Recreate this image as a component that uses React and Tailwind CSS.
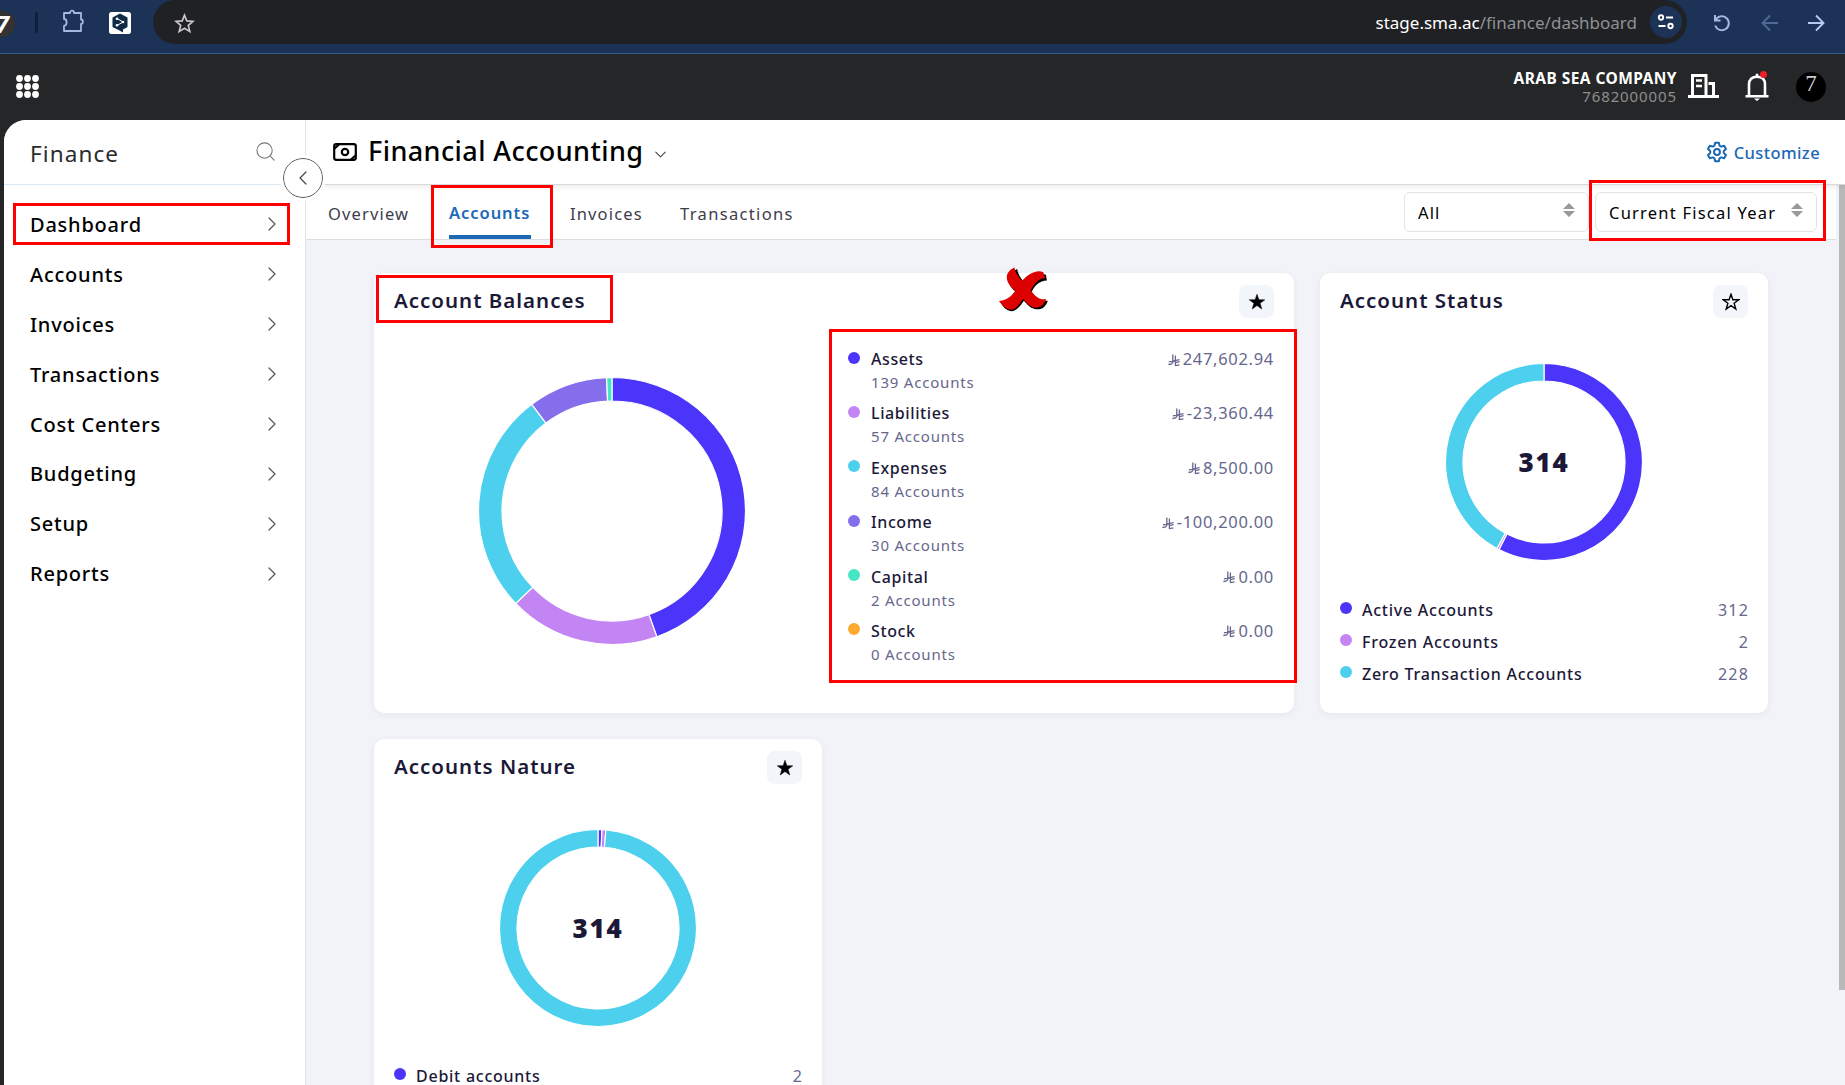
import React from 'react';
import { Search, ChevronRight, ChevronLeft, ChevronDown } from 'lucide-react';

const menu = ['Dashboard', 'Accounts', 'Invoices', 'Transactions', 'Cost Centers', 'Budgeting', 'Setup', 'Reports'];

const balances = [
  { name: 'Assets', count: 139, amount: '247,602.94', color: '#4b35fa' },
  { name: 'Liabilities', count: 57, amount: '-23,360.44', color: '#c485f4' },
  { name: 'Expenses', count: 84, amount: '8,500.00', color: '#4dd0ed' },
  { name: 'Income', count: 30, amount: '-100,200.00', color: '#856eec' },
  { name: 'Capital', count: 2, amount: '0.00', color: '#46e6c4' },
  { name: 'Stock', count: 0, amount: '0.00', color: '#ffa931' },
];

const status = [
  { name: 'Active Accounts', count: 312, color: '#4b35fa' },
  { name: 'Frozen Accounts', count: 2, color: '#c485f4' },
  { name: 'Zero Transaction Accounts', count: 228, color: '#4dd0ed' },
];

const nature = [
  { name: 'Debit accounts', count: 2, color: '#4b35fa' },
  { name: 'Credit accounts', count: 2, color: '#c485f4' },
  { name: 'Both', count: 310, color: '#4dd0ed' },
];

function Donut({ size, outer, inner, data, label }) {
  const total = data.reduce((sum, d) => sum + d.count, 0);
  const c = size / 2;
  const point = (r, t) => {
    const a = t * 2 * Math.PI;
    return `${c + r * Math.sin(a)} ${c - r * Math.cos(a)}`;
  };
  let from = 0;

  return (
    <div className="relative flex items-center justify-center">
      <svg width={size} height={size}>
        {data.filter((d) => d.count > 0).map((d) => {
          const start = from / total;
          from += d.count;
          const end = from / total;
          const large = end - start > 0.5 ? 1 : 0;
          return (
            <path
              key={d.name}
              d={`M${point(outer, start)}A${outer} ${outer} 0 ${large} 1 ${point(outer, end)}L${point(inner, end)}A${inner} ${inner} 0 ${large} 0 ${point(inner, start)}Z`}
              fill={d.color}
              stroke="#fff"
              strokeWidth="1.2"
            />
          );
        })}
      </svg>
      {label && (
        <span className="absolute top-1/2 -translate-y-1/2 text-[26px] font-black tracking-[1.8px] text-[#1c1938]">{label}</span>
      )}
    </div>
  );
}

function Riyal() {
  return (
    <svg width="12" height="13" viewBox="0 0 12 13" fill="none" stroke="currentColor" strokeWidth="1.3" className="mt-0.5 mr-[3px]">
      <path d="M4.8 0.6V8.2L3.6 9.8L0.4 10.5M7.4 1.4V12M0.9 7.9L11.6 5.6M7.4 8.6L11.6 7.7M7.4 11.7L11.4 10.8" />
    </svg>
  );
}

function StarButton({ filled }) {
  return (
    <button className="flex h-[33px] w-[35px] items-center justify-center rounded-lg bg-[#f2f5fa]">
      <svg width="18" height="18" viewBox="0 0 18 18" fill={filled ? '#000' : 'none'} stroke="#000" strokeWidth={filled ? 0.5 : 1.4}>
        <path d="M9 1.2L10.9 6.7L16.8 6.8L12.1 10.3L13.8 16L9 12.6L4.2 16L5.9 10.3L1.2 6.8L7.1 6.7Z" />
      </svg>
    </button>
  );
}

function Card({ title, filled, className, children }) {
  return (
    <section className={`relative flex flex-col rounded-[10px] bg-white px-5 pt-3 shadow-[0_2px_6px_rgba(60,50,140,0.07)] ${className}`}>
      <div className="flex items-start justify-between">
        <h2 className="mt-px text-[20.5px] leading-[29px] font-semibold tracking-[1px] text-[#1c1938]">{title}</h2>
        <StarButton filled={filled} />
      </div>
      {children}
    </section>
  );
}

function Legend({ data }) {
  return (
    <ul className="mt-[32px] flex flex-col">
      {data.map((d) => (
        <li key={d.name} className="flex h-8 items-center text-[16px]">
          <span className="mr-[10px] mb-1 size-3 rounded-full" style={{ backgroundColor: d.color }} />
          <span className="font-medium tracking-[0.75px] text-[#1c1938]">{d.name}</span>
          <span className="-mr-px ml-auto tracking-[1.2px] text-[#66678d]">{d.count}</span>
        </li>
      ))}
    </ul>
  );
}

function SortArrows() {
  return (
    <svg width="12" height="14" viewBox="0 0 12 14" fill="#999" className="-mt-1">
      <path d="M6 0L12 6H0ZM6 14L0 8H12Z" />
    </svg>
  );
}

function BrowserBar() {
  return (
    <div className="flex h-[54px] items-start border-b border-[#3a5a8c] bg-[#1c3257]">
      <div className="mt-[11px] flex h-[26px] w-[15px] items-center justify-end overflow-hidden rounded-r-full bg-[#333] pr-[6px] text-[24px] font-bold text-white italic">7</div>
      <div className="mt-3 ml-5 h-[21px] w-[3px] rounded bg-[#0f1e3c]" />
      <svg width="24" height="24" viewBox="0 0 24 24" fill="none" stroke="#a3b9df" strokeWidth="1.8" strokeLinejoin="round" className="mt-[9px] ml-[23px]">
        <path d="M3 4H9C9 .9 13 .9 13 4H20V10.5C22.5 10.5 22.5 15 20 15V22H3V17C6.5 16.5 6.5 10 3 10Z" />
      </svg>
      <svg width="22" height="22" viewBox="0 0 22 22" className="mt-3 ml-6">
        <rect width="22" height="22" rx="2.5" fill="#fff" />
        <path d="M11 1.5L18.5 5.5V15L14 17.5V20.5L10.5 18.5L3.5 15V5.5Z" fill="#0f2b46" />
        <path d="M8 6.5L14 10L8 13.5" fill="none" stroke="#fff" />
        <circle cx="8" cy="6.8" r="1.3" fill="#fff" />
        <circle cx="14" cy="10" r="1.3" fill="#fff" />
        <circle cx="8" cy="13.2" r="1.3" fill="#fff" />
      </svg>
      <div className="ml-[22px] flex h-11 w-[1534px] items-center rounded-full bg-[#202124] pr-[5px] pl-[21px]">
        <svg width="21" height="21" viewBox="0 0 21 21" fill="none" stroke="#c7c7c7" strokeWidth="1.7" className="mt-0.5">
          <path d="M10.5 2.2L12.8 7.9L19 8.4L14.3 12.4L15.8 18.4L10.5 15.2L5.2 18.4L6.7 12.4L2 8.4L8.2 7.9Z" />
        </svg>
        <span className="mt-px ml-auto text-[17px] text-white">stage.sma.ac<span className="text-[#8f9195]">/finance/dashboard</span></span>
        <span className="ml-[13px] flex size-8 items-center justify-center rounded-full bg-[#1c3257]">
          <svg width="18" height="18" viewBox="0 0 18 18" fill="none" stroke="#fff" strokeWidth="1.9">
            <circle cx="4" cy="4.5" r="2.2" />
            <circle cx="13.5" cy="13" r="2.2" />
            <path d="M9 4.500H16M1.500 13H8.500" />
          </svg>
        </span>
      </div>
      <svg width="20" height="20" viewBox="0 0 20 20" fill="none" stroke="#a3b9df" strokeWidth="2" className="mt-[13px] ml-[25px]">
        <path d="M3 2V7.5H8.5M3.5 7.2A7 7 0 1 1 3.2 12.5" />
      </svg>
      <svg width="18" height="18" viewBox="0 0 18 18" fill="none" stroke="#4f6a97" strokeWidth="1.9" className="mt-[14px] ml-[29px]">
        <path d="M17 9H2M9 1.5L1.5 9L9 16.5" />
      </svg>
      <svg width="18" height="18" viewBox="0 0 18 18" fill="none" stroke="#b5cbf0" strokeWidth="1.9" className="mt-[14px] ml-[28px]">
        <path d="M1 9H16M9 1.5L16.5 9L9 16.5" />
      </svg>
    </div>
  );
}

function Header() {
  return (
    <header className="flex h-[66px] items-center bg-[#242628] pr-[19px] pb-px pl-4">
      <svg width="23" height="23" viewBox="0 0 23 23" fill="#fff">
        {[3.5, 11.5, 19.5].map((y) => [3.5, 11.5, 19.5].map((x) => <circle key={`${x}-${y}`} cx={x} cy={y} r="3.4" />))}
      </svg>
      <div className="ml-auto text-right">
        <div className="text-[15.5px] leading-[18px] font-bold tracking-[0.45px] text-white">ARAB SEA COMPANY</div>
        <div className="text-[15px] leading-[18px] tracking-[0.9px] text-[#8e8e8e]">7682000005</div>
      </div>
      <svg width="31" height="26" viewBox="0 0 31 26" fill="none" stroke="#fff" strokeWidth="3" className="-mt-0.5 ml-[11px]">
        <path d="M0 23.5H31M4.5 23.5V2.5H18V23.5M20.5 10.5H25.5V23.5" />
        <path d="M8 7.5H14M8 13H14" strokeWidth="2.6" />
      </svg>
      <span className="relative ml-[26px]">
        <svg width="24" height="28" viewBox="0 0 24 28" fill="none" stroke="#fff" strokeWidth="2.6">
          <path d="M0.5 23.2H23.5M4 23V11.5C4 6.5 7 3.8 12 3.8S20 6.5 20 11.5V23M12 0.8V3.5" />
          <path d="M9 25.5H15L12 28Z" fill="#fff" stroke="none" />
        </svg>
        <span className="absolute -top-0.5 right-0.5 size-[7px] rounded-full bg-[#f01f28]" />
      </span>
      <span className="ml-[27px] flex size-[30px] items-center justify-center rounded-full bg-black pb-1 font-['Liberation_Serif',serif] text-[23px] text-[#ccc]">7</span>
    </header>
  );
}

function Sidebar() {
  return (
    <aside className="relative z-10 w-[302px] shrink-0 border-r border-[#dbe3ef] bg-white">
      <div className="flex h-[65px] items-center justify-between border-b border-[#d9e8f5] pr-[28px] pl-[26px]">
        <span className="mt-1 text-[22.5px] tracking-[1.1px] text-[#2b2b2b]">Finance</span>
        <Search size={23} strokeWidth={1.1} className="-mt-0.5 text-[#777]" />
      </div>
      <nav className="pt-[15px]">
        {menu.map((item) => (
          <a key={item} className="flex h-[49.9px] items-center justify-between pr-[21px] pl-[26px]">
            <span className="text-[20px] font-medium tracking-[0.78px] text-black">{item}</span>
            <ChevronRight size={24} strokeWidth={1.2} className="-mt-px text-[#555]" />
          </a>
        ))}
      </nav>
      <button className="absolute top-[38px] -right-[18px] flex size-10 items-center justify-center rounded-full border border-[#555] bg-white outline-3 outline-white">
        <ChevronLeft size={24} strokeWidth={1.2} className="text-[#444]" />
      </button>
      <div className="absolute top-[83px] left-[9px] h-[42px] w-[277px] border-3 border-[#ff0000]" />
    </aside>
  );
}

function TitleBar() {
  return (
    <div className="relative flex h-[65px] items-center border-b border-[#d9d9d9] bg-white pr-[25px] pl-[27px] shadow-[0_2px_5px_rgba(0,0,0,0.08)]">
      <svg width="24" height="18" viewBox="0 0 24 18" fill="none" stroke="#000" strokeWidth="2.2">
        <rect x="1.2" y="1.2" width="21.6" height="15.6" rx="2" />
        <circle cx="12" cy="9" r="3.2" />
        <path d="M1.5 5.5L6 1.5M22.5 12.5L18 16.5" />
      </svg>
      <h1 className="-mt-0.5 ml-[11px] text-[27px] font-medium tracking-[0.42px] text-black">Financial Accounting</h1>
      <ChevronDown size={19} strokeWidth={1.3} className="mt-1 ml-[8px] text-[#444]" />
      <a className="mt-0.5 ml-auto flex items-center text-[#1b69b6]">
        <svg width="22" height="22" viewBox="0 0 24 24" fill="none" stroke="currentColor" strokeWidth="2.2" strokeLinejoin="round" className="-mt-0.5 mr-[6px]">
          <path d="M10 1.8H14L14.7 5L16.7 6.1L19.8 5.1L21.8 8.6L19.4 10.8V13.2L21.8 15.4L19.8 18.9L16.7 17.9L14.7 19L14 22.2H10L9.3 19L7.3 17.9L4.2 18.9L2.2 15.4L4.6 13.2V10.8L2.2 8.6L4.2 5.1L7.3 6.1L9.3 5Z" />
          <circle cx="12" cy="12" r="3.2" />
        </svg>
        <span className="text-[16.5px] font-medium tracking-[0.4px]">Customize</span>
      </a>
    </div>
  );
}

function TabBar() {
  return (
    <div className="mr-[3px] flex h-[55px] border-b border-[#dcdde0] bg-white pr-[19px] pl-[22px] text-[16.5px] tracking-[1.15px] text-[#3d3d4d]">
      <div className="flex w-[82px] items-center pt-[4px]">Overview</div>
      <div className="relative ml-[39px] flex w-[82px] flex-col justify-end font-semibold tracking-[0.95px] text-[#1b69b6]">
        <span className="mb-[9px]">Accounts</span>
        <span className="h-1 bg-[#1b69b6]" />
        <div className="absolute top-0 -left-[18px] h-[63px] w-[122px] border-3 border-[#ff0000]" />
      </div>
      <div className="ml-[39px] flex w-[72px] items-center pt-[4px]">Invoices</div>
      <div className="ml-[38px] flex items-center pt-[4px] tracking-[1.35px]">Transactions</div>
      <div className="mt-[7px] ml-auto flex h-10 w-[185px] items-center justify-between rounded-md border border-[#e2e2e4] pr-[13px] pl-[13px] text-black">
        <span className="mt-0.5">All</span>
        <SortArrows />
      </div>
      <div className="relative mt-[7px] ml-[6px] flex h-10 w-[222px] items-center justify-between rounded-md border border-[#e2e2e4] pr-[13px] pl-[13px] text-black">
        <span className="mt-0.5 tracking-[1.22px] whitespace-nowrap">Current Fiscal Year</span>
        <SortArrows />
        <div className="absolute -top-[13px] -left-[7px] h-[61px] w-[237px] border-3 border-[#ff0000]" />
      </div>
    </div>
  );
}

function BalanceList() {
  return (
    <ul className="mt-[29px] ml-[101px] w-[426px]">
      {balances.map((b) => (
        <li key={b.name} className="flex h-[54.4px] items-start">
          <span className="mt-[4.5px] mr-[11px] size-3 rounded-full" style={{ backgroundColor: b.color }} />
          <div>
            <div className="text-[16px] leading-6 font-medium tracking-[0.6px] text-[#1c1938]">{b.name}</div>
            <div className="text-[15px] leading-[23px] tracking-[0.8px] text-[#66678d]">{b.count} Accounts</div>
          </div>
          <div className="ml-auto flex items-center text-[16.5px] leading-6 tracking-[0.7px] text-[#66678d]">
            <Riyal />
            {b.amount}
          </div>
        </li>
      ))}
    </ul>
  );
}

export default function App() {
  return (
    <div className="h-[1085px] w-[1845px] overflow-hidden bg-[#242628] font-['Noto_Sans',sans-serif]">
      <BrowserBar />
      <Header />
      <div className="ml-1 flex h-[965px] overflow-hidden rounded-tl-[22px] bg-[#f2f3f8]">
        <Sidebar />
        <main className="flex flex-1 flex-col">
          <TitleBar />
          <div className="flex h-[900px]">
            <div className="flex-1">
              <TabBar />
              <div className="flex w-[1462px] flex-wrap gap-[26px] pt-[33px] pl-[68px]">
                <Card title="Account Balances" filled className="h-[440px] w-[920px]">
                  <div className="flex">
                    <div className="mt-[58px] ml-[83px]">
                      <Donut size={270} outer={133.5} inner={110} data={balances} />
                    </div>
                    <BalanceList />
                  </div>
                  <div className="absolute top-[2px] left-[2px] h-[48px] w-[237px] border-3 border-[#ff0000]" />
                  <div className="absolute top-[56px] left-[455px] h-[354px] w-[468px] border-3 border-[#ff0000]" />
                  <svg width="50" height="45" viewBox="0 0 52 46" className="absolute -top-[6px] left-[625px]">
                    <path d="M18 1C20 9 23 12 26 15C33 8 39 4 48 7L49 13C41 13 36 19 33 25C38 31 43 35 50 34C48 40 44 43 40 43C32 43 29 38 25 34C21 40 17 45 12 45C6 44 3 40 1 36C9 35 14 30 17 25C9 19 4 8 18 1Z" fill="#000" transform="translate(0.8 0.6)" />
                    <path d="M16 0C18 8 21 11 24 14C31 6 40 2 46 5L48 11C40 12 36 18 33 24C37 30 42 34 49 33C47 39 43 42 39 42C32 42 29 37 25 33C21 39 17 44 12 44C6 43 3 39 0 35C9 34 14 29 17 24C8 18 3 6 16 0Z" fill="#dd0000" />
                  </svg>
                </Card>
                <Card title="Account Status" className="h-[440px] w-[448px]">
                  <div className="mt-[44px]">
                    <Donut size={200} outer={98.5} inner={81} data={status} label="314" />
                  </div>
                  <Legend data={status} />
                </Card>
                <Card title="Accounts Nature" filled className="h-[440px] w-[448px]">
                  <div className="mt-[44px]">
                    <Donut size={200} outer={98.5} inner={81} data={nature} label="314" />
                  </div>
                  <Legend data={nature} />
                </Card>
              </div>
            </div>
            <div className="h-[805px] w-1.5 bg-[#b9b9b9]" />
          </div>
        </main>
      </div>
    </div>
  );
}
